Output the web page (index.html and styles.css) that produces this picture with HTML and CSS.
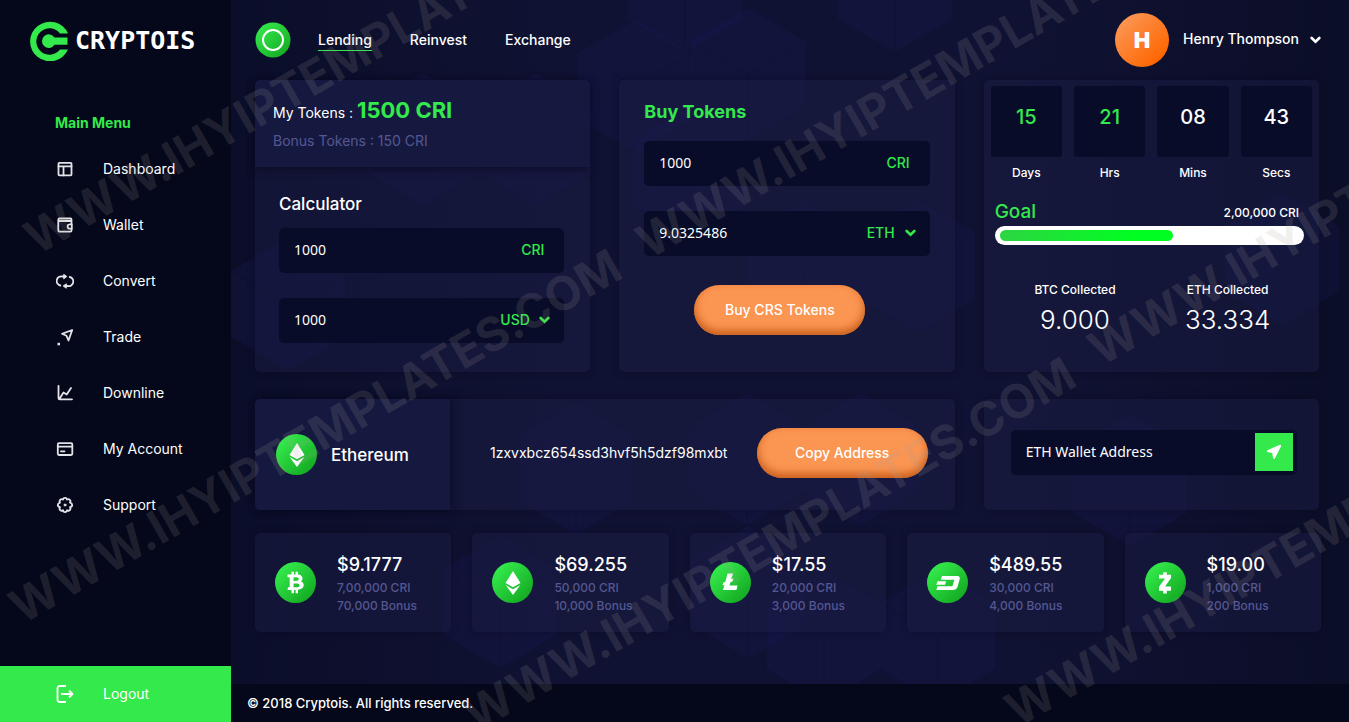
FILE: index.html
```html
<!DOCTYPE html>
<html lang="en">
<head>
<meta charset="utf-8">
<meta name="viewport" content="width=device-width, initial-scale=1">
<title>Cryptois – Lending</title>
<link rel="stylesheet" href="styles.css">
</head>
<body>
<svg class="symbols" width="0" height="0" aria-hidden="true">
  <defs>
    <symbol id="hex" viewBox="0 0 114 132"><path d="M57 0l57 33v66l-57 33-57-33V33z"/><path d="M57 66v66M57 66L0 33M57 66l57-33" fill="none" stroke="#0a0c28" stroke-opacity=".25"/></symbol>
    <symbol id="chevron" viewBox="0 0 12 8"><path d="M1.8 1.800l4.200 4 4.200-4" fill="none" stroke="currentColor" stroke-width="2.800" stroke-linecap="round"/></symbol>
    <symbol id="ether" viewBox="0 0 16 26"><path d="M8 1l7.500 12L8 17.200.5 13z"/><path d="M.6 15L8 19.300 15.400 15 8 25z"/></symbol>
  </defs>
</svg>

<div class="shell">
  <aside class="sidebar">
    <a class="brand" href="#">
      <svg class="brand-mark" viewBox="0 0 38 40" aria-hidden="true">
        <path d="M38 12.500A19.800 19.800 0 1 0 38 28.500H30A13.200 13.200 0 1 1 30 12.500z" fill="#33e94b"/>
        <path d="M37.500 16.500H24.500A6.800 6.800 0 1 0 24.500 23.800H37.500z" fill="#33e94b"/>
      </svg>
      <span class="brand-name">CRYPTOIS</span>
    </a>
    <h2 class="menu-title">Main Menu</h2>
    <nav class="menu" aria-label="Main menu">
      <a class="menu-link" href="#"><svg class="menu-icon" viewBox="0 0 18 18" aria-hidden="true"><rect x="2.500" y="2.800" width="13" height="12.600" rx=".8"/><path d="M2.500 6.400h13M7.500 6.400v9"/></svg>Dashboard</a>
      <a class="menu-link" href="#"><svg class="menu-icon" viewBox="0 0 18 18" aria-hidden="true"><path d="M15.500 8V3.500a1 1 0 0 0-1-1h-11a1.200 1.200 0 0 0-1.200 1.200v10.500a1.500 1.500 0 0 0 1.500 1.500h10.200a1.500 1.500 0 0 0 1.500-1.500V13M2.500 5h13"/><path d="M15.800 8.300h-2a2.200 2.200 0 0 0 0 4.400h2z"/></svg>Wallet</a>
      <a class="menu-link" href="#"><svg class="menu-icon" viewBox="0 0 18 18" aria-hidden="true"><path d="M8.500 4.500H6.300a4.600 4.600 0 0 0-2 9M9.500 14h2.200a4.600 4.600 0 0 0 2-9"/><path d="M8 2.600l2.800 1.900L8 6.600zM10 12l-2.800 2L10 16z" class="solid"/></svg>Convert</a>
      <a class="menu-link" href="#"><svg class="menu-icon" viewBox="0 0 18 18" aria-hidden="true"><path d="M16.200 2L6 5.800l4.500 2 2 4.700z"/><path d="M1.500 14.800h2.500v2.500H1.500z" class="solid-flat"/></svg>Trade</a>
      <a class="menu-link" href="#"><svg class="menu-icon" viewBox="0 0 18 18" aria-hidden="true"><path d="M2.500 2v12a1.300 1.300 0 0 0 1.300 1.300H16M4 14l3.500-5.500 3.200 2L15 4"/></svg>Downline</a>
      <a class="menu-link" href="#"><svg class="menu-icon" viewBox="0 0 18 18" aria-hidden="true"><rect x="1.800" y="3.200" width="14.500" height="11.800" rx="1.200"/><path d="M1.800 6.600h14.500M5 11.300h3.500"/></svg>My Account</a>
      <a class="menu-link" href="#"><svg class="menu-icon" viewBox="0 0 18 18" aria-hidden="true"><path d="M7 3.500Q7.300 1.800 9 1.800t2 1.700q1.600-1 2.800.3t.2 2.800q2.200.6 2.200 2.400t-2.200 2.200q1 1.700-.2 2.900t-2.800.1q-.3 2-2 2t-2-2q-1.600 1.100-2.800-.1t-.2-2.900Q1.800 10.800 1.800 9T4 6.600Q3 5.100 4.200 3.800T7 3.500z"/><circle cx="9" cy="9" r="1" class="solid"/></svg>Support</a>
    </nav>
    <a class="logout" href="#"><svg class="logout-icon" viewBox="0 0 18 18" aria-hidden="true"><path d="M10 1H4a2.500 2.500 0 0 0-2.500 2.500v11A2.500 2.500 0 0 0 4 17h6M5 9h11.500M13 5.500L16.500 9 13 12.500"/></svg>Logout</a>
  </aside>

  <div class="page">
    <svg class="backdrop" viewBox="0 0 1118 722" preserveAspectRatio="xMidYMin slice" aria-hidden="true">
      <g fill="#1a1b58" fill-opacity=".26">
        <use href="#hex" x="607" y="-80" width="114" height="132"/>
        <use href="#hex" x="397" y="-80" width="114" height="132"/>
        <use href="#hex" x="347" y="20" width="114" height="132"/>
        <use href="#hex" x="460" y="8" width="114" height="132"/>
        <use href="#hex" x="135" y="73" width="114" height="132"/>
        <use href="#hex" x="248" y="73" width="114" height="132"/>
        <use href="#hex" x="0" y="238" width="114" height="132"/>
        <use href="#hex" x="403" y="106" width="114" height="132"/>
        <use href="#hex" x="516" y="200" width="114" height="132"/>
        <use href="#hex" x="630" y="200" width="114" height="132"/>
        <use href="#hex" x="994" y="193" width="114" height="132"/>
        <use href="#hex" x="288" y="402" width="114" height="132"/>
        <use href="#hex" x="459" y="393" width="114" height="132"/>
        <use href="#hex" x="573" y="393" width="114" height="132"/>
        <use href="#hex" x="842" y="414" width="114" height="132"/>
        <use href="#hex" x="212" y="536" width="114" height="132"/>
        <use href="#hex" x="460" y="526" width="114" height="132"/>
        <use href="#hex" x="536" y="570" width="114" height="132"/>
        <use href="#hex" x="650" y="570" width="114" height="132"/>
      </g>
    </svg>

    <header class="topbar">
      <svg class="coin-badge" viewBox="0 0 36 36" aria-hidden="true"><circle cx="18" cy="18" r="17.500" fill="url(#greenFill)"/><circle cx="18" cy="18" r="10" fill="none" stroke="#fff" stroke-width="2"/>
        <defs><linearGradient id="greenFill" x1="0" y1="0" x2="1" y2="1"><stop offset=".1" stop-color="#33e94b"/><stop offset=".95" stop-color="#13a821"/></linearGradient></defs>
      </svg>
      <nav class="tabs" aria-label="Sections">
        <a class="tab tab-active" href="#">Lending</a>
        <a class="tab" href="#">Reinvest</a>
        <a class="tab" href="#">Exchange</a>
      </nav>
      <button class="account" type="button">
        <span class="avatar">H</span>
        <span class="account-name">Henry Thompson</span>
        <svg class="chevron" aria-hidden="true"><use href="#chevron"/></svg>
      </button>
    </header>

    <main class="content">
      <div class="grid">
        <section class="card">
          <div class="balance">
            <p class="balance-main">My Tokens : <strong>1500 CRI</strong></p>
            <p class="balance-bonus">Bonus Tokens : 150 CRI</p>
          </div>
          <div class="calculator">
            <h2 class="card-title">Calculator</h2>
            <div class="field">
              <input class="field-input" type="text" value="1000" aria-label="Amount in CRI">
              <span class="unit">CRI</span>
            </div>
            <div class="field">
              <input class="field-input" type="text" value="1000" aria-label="Converted amount">
              <span class="picker"><select class="unit-select" aria-label="Currency"><option>USD</option></select><svg class="chevron" aria-hidden="true"><use href="#chevron"/></svg></span>
            </div>
          </div>
        </section>

        <section class="card buy">
          <h2 class="buy-title">Buy Tokens</h2>
          <div class="field">
            <input class="field-input" type="text" value="1000" aria-label="Tokens to buy">
            <span class="unit">CRI</span>
          </div>
          <div class="field">
            <input class="field-input" type="text" value="9.0325486" aria-label="Price">
            <span class="picker"><select class="unit-select" aria-label="Payment currency"><option>ETH</option></select><svg class="chevron" aria-hidden="true"><use href="#chevron"/></svg></span>
          </div>
          <button class="pill" type="button">Buy CRS Tokens</button>
        </section>

        <section class="card sale">
          <div class="countdown">
            <div class="time time-green"><span class="time-box">15</span>Days</div>
            <div class="time time-green"><span class="time-box">21</span>Hrs</div>
            <div class="time"><span class="time-box">08</span>Mins</div>
            <div class="time"><span class="time-box">43</span>Secs</div>
          </div>
          <div class="goal">
            <div class="goal-head"><h2 class="goal-title">Goal</h2><span class="goal-sum">2,00,000 CRI</span></div>
            <div class="track" role="progressbar" aria-label="Goal" aria-valuenow="58" aria-valuemin="0" aria-valuemax="100"><div class="track-fill" style="width:58%"></div></div>
          </div>
          <div class="collected">
            <div class="total">BTC Collected<span class="total-value">9.000</span></div>
            <div class="total">ETH Collected<span class="total-value">33.334</span></div>
          </div>
        </section>

        <section class="card wallet">
          <div class="wallet-coin">
            <span class="coin"><svg class="coin-ether" aria-hidden="true"><use href="#ether"/></svg></span>
            <h2 class="card-title">Ethereum</h2>
          </div>
          <div class="wallet-address">
            <span class="address">1zxvxbcz654ssd3hvf5h5dzf98mxbt</span>
            <button class="pill" type="button">Copy Address</button>
          </div>
        </section>

        <section class="card send">
          <form class="field">
            <input class="field-input" type="text" placeholder="ETH Wallet Address" aria-label="ETH Wallet Address">
            <button class="send-button" type="button" aria-label="Send"><svg class="send-icon" viewBox="0 0 16 16" aria-hidden="true"><path d="M13.800.8L1.400 6.200q-1.300.9 0 1.900l4.800.9.900 5.300q1 1.300 1.900 0L15.200 2.100q.1-1.500-1.400-1.300z"/></svg></button>
          </form>
        </section>
      </div>

      <div class="rates">
        <article class="card rate">
          <span class="coin"><svg class="coin-glyph" viewBox="0 0 24 24" aria-hidden="true"><path fill-rule="evenodd" d="M3.500 3.500h4V.8H10v2.700h1.600V.8H14v2.800c4.500.2 6 4.500 3 7 4.500 1.700 3.500 8-3 8.200v3.400h-2.400v-3.300H10v3.300H7.500v-3.300h-4l.5-2.700h1.700V6.200H3.500zM9.500 6.300v3.600c4.300.2 5.300-.4 5.300-1.900 0-1.500-1.300-1.900-5.300-1.700zm0 6.200v3.800c4.500.2 6-.3 6-1.900s-1.500-2.100-6-1.900z"/></svg></span>
          <div class="rate-text"><h3 class="rate-price">$9.1777</h3><p class="rate-note">7,00,000 CRI</p><p class="rate-note">70,000 Bonus</p></div>
        </article>
        <article class="card rate">
          <span class="coin"><svg class="coin-ether" aria-hidden="true"><use href="#ether"/></svg></span>
          <div class="rate-text"><h3 class="rate-price">$69.255</h3><p class="rate-note">50,000 CRI</p><p class="rate-note">10,000 Bonus</p></div>
        </article>
        <article class="card rate">
          <span class="coin"><svg class="coin-glyph" viewBox="0 0 24 24" aria-hidden="true"><path d="M9.500 2.500h5.500l-1.700 5.700 2.300-.9-.9 3-2.300.9-.8 3.300h8l-1.200 4.500H5l1.500-5.200-2 .8.900-3 2-.9z"/></svg></span>
          <div class="rate-text"><h3 class="rate-price">$17.55</h3><p class="rate-note">20,000 CRI</p><p class="rate-note">3,000 Bonus</p></div>
        </article>
        <article class="card rate">
          <span class="coin"><svg class="coin-glyph" viewBox="0 0 24 24" aria-hidden="true"><path d="M6 5h15.500q2.800.2 2.200 3l-2.200 8q-.9 2.800-3.900 3H.3l1.300-3.700h14.800l1.900-6.600H4.800zM1.500 10.200h8.700l-1.200 3.500H.3z"/></svg></span>
          <div class="rate-text"><h3 class="rate-price">$489.55</h3><p class="rate-note">30,000 CRI</p><p class="rate-note">4,000 Bonus</p></div>
        </article>
        <article class="card rate">
          <span class="coin"><svg class="coin-glyph" viewBox="0 0 24 24" aria-hidden="true"><path d="M10.200 1.200h3.600v2.500H18V7l-6 8.500h6v4.200h-4.200v2.800h-3.600v-2.800H6v-3.900l6-8.200H6V3.700h4.200z"/></svg></span>
          <div class="rate-text"><h3 class="rate-price">$19.00</h3><p class="rate-note">1,000 CRI</p><p class="rate-note">200 Bonus</p></div>
        </article>
      </div>
    </main>

    <footer class="footer">© 2018 Cryptois. All rights reserved.</footer>
  </div>
</div>

<svg class="watermark" aria-hidden="true">
  <text transform="translate(37 256) rotate(-30)">WWW.IHYIPTEMPLATES.COM</text>
  <text transform="translate(22 625) rotate(-30)">WWW.IHYIPTEMPLATES.COM</text>
  <text transform="translate(649 260) rotate(-30)">WWW.IHYIPTEMPLATES.COM</text>
  <text transform="translate(476 733) rotate(-30)">WWW.IHYIPTEMPLATES.COM</text>
  <text transform="translate(1101 367) rotate(-30)">WWW.IHYIPTEMPLATES.COM</text>
  <text transform="translate(1018 728) rotate(-30)">WWW.IHYIPTEMPLATES.COM</text>
</svg>
</body>
</html>
```
FILE: styles.css
```css
:root {
  --green: #33e94b;
  --well: #080c28;
  --muted: #545791;
}

* { box-sizing: border-box; }

body {
  margin: 0;
  background: #0c0f2b;
  color: #fff;
  font: 500 14px/20px Inter, "Liberation Sans", sans-serif;
}

h2, h3, p { margin: 0; font-weight: 500; }
a { color: inherit; text-decoration: none; }
button, input, select { font: inherit; color: inherit; border: 0; background: none; padding: 0; }
button { cursor: pointer; }
.symbols { position: absolute; }

.shell { display: flex; min-height: 100vh; }

/* Sidebar */
.sidebar {
  display: flex;
  flex-direction: column;
  flex: 0 0 231px;
  background: #04081a;
}
.brand { display: flex; align-items: center; gap: 7px; padding: 21px 0 0 30px; }
.brand-mark { width: 38px; height: 40px; }
.brand-name { font: 700 25px/40px "DejaVu Sans Mono", monospace; }
.menu-title { margin: 52px 0 0 55px; color: var(--green); font-size: 14px; font-weight: 700; }
.menu { display: flex; flex-direction: column; margin-top: 8px; }
.menu-link, .logout { display: flex; align-items: center; gap: 29px; height: 56px; padding-left: 56px; font-weight: 400; font-size: 14px; }
.menu-icon { width: 18px; height: 18px; fill: none; stroke: #e3e4e8; stroke-width: 1.8; stroke-linejoin: round; stroke-linecap: round; }
.solid { fill: #e3e4e8; stroke-width: 1; }
.solid-flat { fill: #e3e4e8; stroke: none; }
.logout { margin-top: auto; background: var(--green); }
.logout-icon { width: 18px; height: 18px; fill: none; stroke: #fff; stroke-width: 1.8; stroke-linejoin: round; }

/* Page */
.page {
  position: relative;
  display: flex;
  flex: 1;
  flex-direction: column;
  min-width: 0;
  background: linear-gradient(90deg, #0b0e29, #101233 30%, #101233 70%, #0b0e27);
}
.backdrop { position: absolute; inset: 0; width: 100%; height: 100%; }
.topbar, .content, .footer { position: relative; }

.topbar { display: flex; align-items: center; height: 80px; padding: 0 28px 0 24px; }
.coin-badge { width: 36px; height: 36px; }
.tabs { display: flex; gap: 38px; margin-left: 27px; }
.tab { border-bottom: 1px solid transparent; }
.tab-active { border-color: var(--green); }
.account { display: flex; align-items: center; margin-left: auto; }
.avatar {
  width: 54px;
  height: 54px;
  margin-right: 14px;
  border-radius: 50%;
  background: linear-gradient(135deg, #fb9450 15%, #ff6600 85%);
  font-size: 22px;
  font-weight: 900;
  line-height: 54px;
}
.account-name { padding-bottom: 3px; }
.chevron { width: 11px; height: 8px; margin-left: 9px; }
.account .chevron { margin-left: 11px; }

.content { flex: 1; padding: 0 30px 52px 24px; }
.grid { display: grid; grid-template-columns: repeat(3, minmax(0, 1fr)); gap: 27px 29px; }
.card {
  border-radius: 5px;
  background: rgba(25, 27, 67, 0.5);
  box-shadow: 0 0 8px rgba(4, 6, 24, 0.3);
}
.card-title { font-size: 17px; line-height: 20px; }

.balance {
  height: 87px;
  padding: 15px 18px;
  border-radius: 5px 5px 0 0;
  background: #16193f;
  box-shadow: 0 3px 8px rgba(4, 6, 24, 0.5);
}
.balance-main { line-height: 30px; font-weight: 400; }
.balance-main strong { color: var(--green); font-size: 22px; }
.balance-bonus { line-height: 26px; color: var(--muted); font-weight: 400; }
.calculator { padding: 27px 26px 29px 24px; }
.calculator .card-title { margin-bottom: 14px; }

.field {
  display: flex;
  align-items: center;
  height: 45px;
  padding: 0 0 1px 15px;
  border-radius: 5px;
  background: var(--well);
}
.field + .field { margin-top: 25px; }
.field-input { flex: 1; min-width: 0; font: 400 14px/20px "Noto Sans", sans-serif; }
.field-input::placeholder { color: #fff; opacity: 1; }
.unit { margin-right: 20px; color: var(--green); }
.picker { display: flex; align-items: center; margin-right: 14px; color: var(--green); }
.unit-select { appearance: none; }

.pill {
  width: 171px;
  height: 50px;
  border-radius: 25px;
  background: #fb9552;
  box-shadow: inset 0 -4px 8px #c45a17;
}
.buy { display: flex; flex-direction: column; padding: 22px 25px 37px; }
.buy-title { margin-bottom: 19px; color: var(--green); font-size: 18px; font-weight: 700; }
.buy .pill { margin: 29px 0 0 50px; }

.countdown { display: grid; grid-template-columns: repeat(4, 1fr); gap: 12px; padding: 6px 7px 0; }
.time { font-size: 12px; line-height: 31px; text-align: center; }
.time-box { display: block; height: 71px; border-radius: 3px; background: var(--well); font-size: 20px; line-height: 62px; }
.time-green .time-box { color: var(--green); }
.goal { padding: 12px 15px 0 11px; }
.goal-head { display: flex; align-items: center; justify-content: space-between; height: 26px; padding-right: 5px; }
.goal-title { padding-bottom: 2px; color: var(--green); font-size: 19px; }
.goal-sum { font-size: 12px; }
.track { height: 19px; padding: 4px 5px; border-radius: 10px; background: #fff; }
.track-fill { height: 11px; border-radius: 6px; background: linear-gradient(90deg, #2dd543, #00ff20 80%); }
.collected { display: grid; grid-template-columns: 1fr 1fr; padding: 35px 15px 32px; text-align: center; }
.total { font-size: 12px; }
.total-value { display: block; font-size: 26px; font-weight: 300; line-height: 40px; }

.wallet { display: flex; grid-column: span 2; height: 111px; }
.wallet-coin {
  display: flex;
  align-items: center;
  flex: 0 0 195px;
  gap: 14px;
  padding-left: 21px;
  border-radius: 5px 0 0 5px;
  background: #16193f;
  box-shadow: 3px 0 8px rgba(4, 6, 24, 0.5);
}
.wallet-address { display: flex; align-items: center; justify-content: space-between; flex: 1; padding: 0 27px 3px 40px; }
.address { font-weight: 400; }
.coin {
  display: grid;
  place-items: center;
  flex: none;
  width: 41px;
  height: 41px;
  border-radius: 50%;
  background: linear-gradient(135deg, #33e94b 15%, #13a821 90%);
}
.coin svg { fill: #fff; }
.coin-glyph { width: 24px; height: 24px; }
.coin-ether { width: 16px; height: 26px; }

.send { padding: 31px 22px 31px 27px; }
.send-button { display: grid; place-items: center; width: 38px; height: 38px; margin-right: 4px; background: var(--green); }
.send-icon { width: 16px; height: 16px; fill: #fff; }

.rates { display: grid; grid-template-columns: repeat(5, minmax(0, 1fr)); gap: 21px; margin: 23px -2px 0 0; }
.rate { display: flex; align-items: center; gap: 21px; height: 99px; padding-left: 20px; }
.rate-price { font-size: 18px; line-height: 28px; }
.rate-note { color: var(--muted); font-size: 12px; line-height: 18px; }

.footer { height: 38px; padding-left: 16px; background: #04081a; font-size: 13px; line-height: 38px; }

.watermark { position: absolute; inset: 0; width: 100%; height: 100%; overflow: hidden; pointer-events: none; }
.watermark text { fill: #a8a09a; fill-opacity: 0.17; font: 700 47px Inter, sans-serif; }
```
